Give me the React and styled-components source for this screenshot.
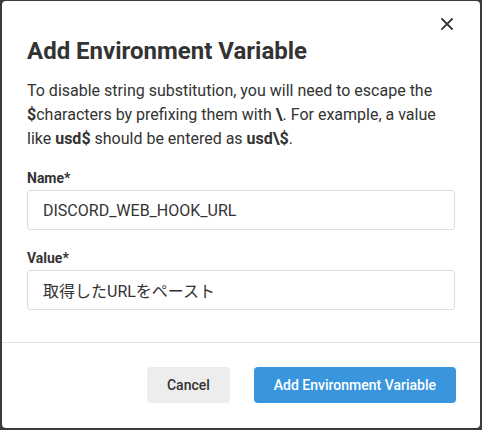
import React from "react";
import styled, { createGlobalStyle } from "styled-components";

const Global = createGlobalStyle`
  html, body { margin: 0; padding: 0; }
  body {
    background: #3b3b3b;
    font-family: Roboto, "Noto Sans CJK JP", sans-serif;
    color: #333;
    width: 482px;
    height: 430px;
    overflow: hidden;
  }
  * { box-sizing: border-box; }
`;

const Backdrop = styled.div`
  width: 482px;
  height: 430px;
  padding: 1px 2px 2px 2px;
  display: flex;
`;

const Dialog = styled.div`
  position: relative;
  flex: 1;
  background: #fff;
  border-radius: 4px;
  display: flex;
  flex-direction: column;
`;

const CloseButton = styled.button`
  position: absolute;
  top: 13px;
  right: 21px;
  width: 24px;
  height: 20px;
  padding: 0;
  border: none;
  background: transparent;
  display: flex;
  align-items: center;
  justify-content: center;
  cursor: pointer;
`;

const Body = styled.div`
  padding: 34px 25px 32px 25px;
  display: flex;
  flex-direction: column;
`;

const Title = styled.h2`
  margin: 0;
  font-size: 24px;
  line-height: 32px;
  font-weight: 700;
  color: #333;
`;

const Description = styled.p`
  margin: 12px 0 0 0;
  font-size: 16px;
  line-height: 24px;
  color: #333;
  b { font-weight: 700; }
`;

const Field = styled.div`
  margin-top: ${(p) => p.$gap}px;
  display: flex;
  flex-direction: column;
`;

const Label = styled.label`
  font-size: 14px;
  line-height: 20px;
  font-weight: 700;
  color: #333;
  margin-bottom: 2px;
`;

const Input = styled.input`
  height: 40px;
  width: 100%;
  border: 1px solid #dcdcdc;
  border-radius: 3px;
  padding: 0 15px;
  font-family: Roboto, "Noto Sans CJK JP", sans-serif;
  font-size: 16px;
  color: #333;
  outline: none;
  background: #fff;
`;

const Divider = styled.hr`
  margin: 0;
  border: none;
  border-top: 1px solid #e3e3e3;
`;

const Footer = styled.div`
  display: flex;
  justify-content: flex-end;
  gap: 24px;
  padding: 24px 24px 24px 24px;
`;

const Button = styled.button`
  height: 36px;
  padding: 0 ${(p) => (p.$primary ? 20 : 20)}px;
  border: none;
  border-radius: 4px;
  font-family: Roboto, sans-serif;
  font-size: 14px;
  font-weight: 500;
  background: ${(p) => (p.$primary ? "#3996de" : "#ededed")};
  color: ${(p) => (p.$primary ? "#fff" : "#333")};
  cursor: pointer;
`;

export default function App() {
  return (
    <>
      <Global />
      <Backdrop>
        <Dialog>
          <CloseButton aria-label="Close">
            <svg width="12" height="12" viewBox="0 0 12 12">
              <path d="M1 1 L11 11 M11 1 L1 11" stroke="#333" strokeWidth="1.8" strokeLinecap="square" />
            </svg>
          </CloseButton>
          <Body>
            <Title>Add Environment Variable</Title>
            <Description>
              To disable string substitution, you will need to escape the <b>$</b>characters by prefixing them with <b>\</b>. For example, a value like <b>usd$</b> should be entered as <b>usd\$</b>.
            </Description>
            <Field $gap={17}>
              <Label>Name*</Label>
              <Input defaultValue="DISCORD_WEB_HOOK_URL" />
            </Field>
            <Field $gap={18}>
              <Label>Value*</Label>
              <Input defaultValue="取得したURLをペースト" />
            </Field>
          </Body>
          <Divider />
          <Footer>
            <Button>Cancel</Button>
            <Button $primary>Add Environment Variable</Button>
          </Footer>
        </Dialog>
      </Backdrop>
    </>
  );
}
